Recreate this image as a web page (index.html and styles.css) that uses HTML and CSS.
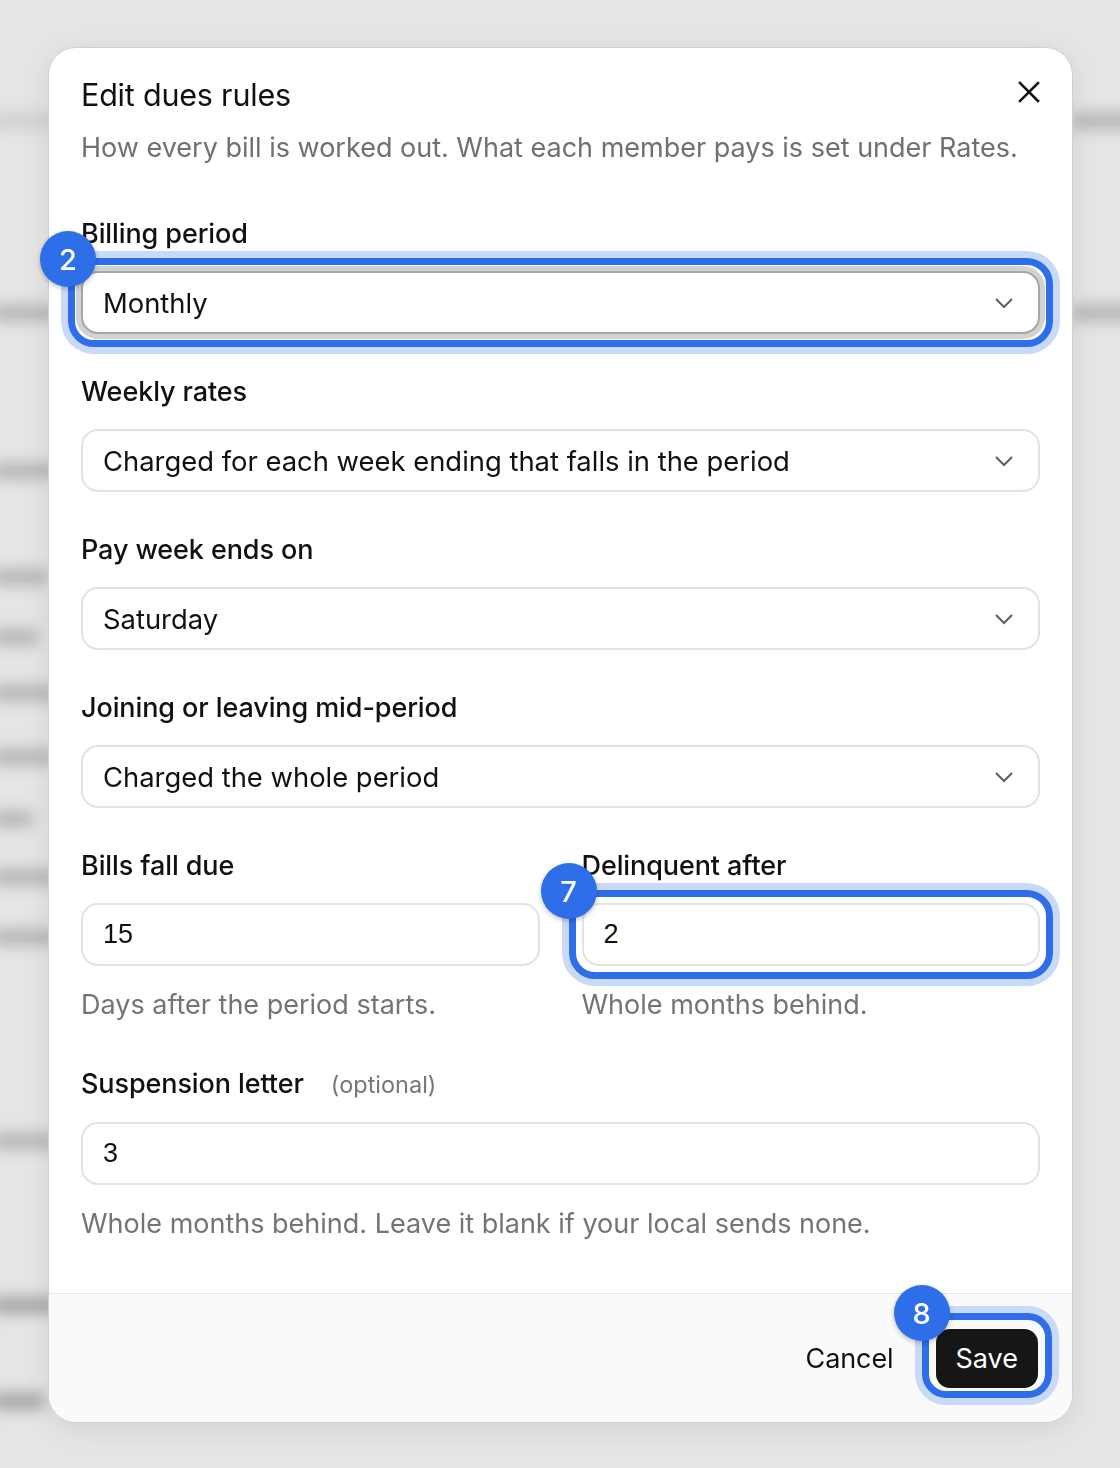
FILE: index.html
```html
<!DOCTYPE html>
<html lang="en">
<head>
<meta charset="utf-8">
<title>Edit dues rules</title>
<link rel="stylesheet" href="styles.css">
</head>
<body>
<div class="backdrop" aria-hidden="true">
  <span class="smudge s1"></span><span class="smudge s2"></span><span class="smudge s3"></span>
  <span class="smudge s4"></span><span class="smudge s5"></span><span class="smudge s6"></span>
  <span class="smudge s7"></span><span class="smudge s8"></span><span class="smudge s9"></span>
  <span class="smudge s10"></span><span class="smudge s11"></span><span class="smudge s12"></span>
  <span class="smudge s13"></span><span class="smudge r1"></span><span class="smudge r2"></span>
</div>

<div class="modal" role="dialog" aria-labelledby="dlg-title">
  <div class="modal-body">
    <header class="modal-head">
      <h1 id="dlg-title">Edit dues rules</h1>
      <button class="close" aria-label="Close">
        <svg width="22" height="22" viewBox="0 0 22 22"><path d="M2 2 L20 20 M20 2 L2 20" stroke="#111" stroke-width="2.6" stroke-linecap="square" fill="none"/></svg>
      </button>
    </header>
    <p class="lede">How every bill is worked out. What each member pays is set under Rates.</p>

    <div class="fields">
      <div class="field">
        <div class="label">Billing period</div>
        <div class="hl">
          <span class="badge">2</span>
          <div class="control select is-focus">Monthly<svg class="chev" width="20" height="12" viewBox="0 0 20 12"><path d="M2 2 L10 10 L18 2" stroke="#5f5f5f" stroke-width="2" fill="none"/></svg></div>
        </div>
      </div>

      <div class="field">
        <div class="label">Weekly rates</div>
        <div class="control select">Charged for each week ending that falls in the period<svg class="chev" width="20" height="12" viewBox="0 0 20 12"><path d="M2 2 L10 10 L18 2" stroke="#5f5f5f" stroke-width="2" fill="none"/></svg></div>
      </div>

      <div class="field">
        <div class="label">Pay week ends on</div>
        <div class="control select">Saturday<svg class="chev" width="20" height="12" viewBox="0 0 20 12"><path d="M2 2 L10 10 L18 2" stroke="#5f5f5f" stroke-width="2" fill="none"/></svg></div>
      </div>

      <div class="field">
        <div class="label">Joining or leaving mid-period</div>
        <div class="control select">Charged the whole period<svg class="chev" width="20" height="12" viewBox="0 0 20 12"><path d="M2 2 L10 10 L18 2" stroke="#5f5f5f" stroke-width="2" fill="none"/></svg></div>
      </div>

      <div class="row2">
        <div class="field">
          <div class="label">Bills fall due</div>
          <div class="control input">15</div>
          <p class="help">Days after the period starts.</p>
        </div>
        <div class="field">
          <div class="label">Delinquent after</div>
          <div class="hl">
            <span class="badge">7</span>
            <div class="control input">2</div>
          </div>
          <p class="help">Whole months behind.</p>
        </div>
      </div>

      <div class="field">
        <div class="label">Suspension letter <span class="opt">(optional)</span></div>
        <div class="control input">3</div>
        <p class="help">Whole months behind. Leave it blank if your local sends none.</p>
      </div>
    </div>
  </div>

  <footer class="modal-foot">
    <button class="cancel">Cancel</button>
    <div class="hl hl-save">
      <span class="badge">8</span>
      <button class="save">Save</button>
    </div>
  </footer>
</div>
</body>
</html>
```

FILE: styles.css
```css
* { box-sizing: border-box; }

html, body {
  margin: 0;
  padding: 0;
}

body {
  width: 1120px;
  height: 1468px;
  overflow: hidden;
  position: relative;
  background: #e5e5e5;
  font-family: Inter, "Noto Sans", "Liberation Sans", sans-serif;
  color: #111;
}

/* blurred page behind the dialog */
.backdrop {
  position: absolute;
  inset: 0;
  z-index: 0;
  filter: blur(7px);
}
.smudge {
  position: absolute;
  height: 18px;
  border-radius: 9px;
  background: #b9b9b9;
}
.s1 { left: -10px; top: 112px; width: 70px; background: #d2d2d2; }
.s2 { left: -10px; top: 304px; width: 70px; }
.s3 { left: -10px; top: 462px; width: 70px; }
.s4 { left: -10px; top: 568px; width: 60px; }
.s5 { left: -10px; top: 628px; width: 50px; }
.s6 { left: -10px; top: 684px; width: 70px; }
.s7 { left: -10px; top: 748px; width: 66px; }
.s8 { left: -10px; top: 810px; width: 44px; }
.s9 { left: -10px; top: 868px; width: 70px; }
.s10 { left: -10px; top: 928px; width: 70px; }
.s11 { left: -10px; top: 1132px; width: 70px; }
.s12 { left: -10px; top: 1296px; width: 70px; background: #a9a9a9; }
.s13 { left: -10px; top: 1392px; width: 56px; background: #a9a9a9; }
.r1 { left: 1070px; top: 112px; width: 70px; }
.r2 { left: 1070px; top: 304px; width: 70px; }

/* dialog */
.modal {
  position: relative;
  z-index: 1;
  width: 1025px;
  margin: 47px 0 0 48px;
  background: #fff;
  border: 1px solid #cfcfcf;
  border-radius: 28px;
  box-shadow: 0 6px 28px rgba(0, 0, 0, 0.08);
}

.modal-body {
  padding: 26px 32px 48px;
}

.modal-head {
  display: flex;
  align-items: center;
  justify-content: space-between;
}

h1 {
  margin: 0;
  font-size: 30.5px;
  line-height: 42px;
  font-weight: 400;
  letter-spacing: -0.2px;
  color: #111;
}

.close {
  border: 0;
  background: none;
  padding: 0;
  margin: -6px 0 0 0;
  width: 22px;
  height: 22px;
  display: flex;
}

.lede {
  margin: 12px 0 0;
  font-size: 27px;
  line-height: 40px;
  color: #707070;
}

.fields {
  margin-top: 46px;
  display: flex;
  flex-direction: column;
  gap: 38px;
}

.field {
  display: flex;
  flex-direction: column;
  min-width: 0;
}

.label {
  font-size: 27px;
  line-height: 40px;
  font-weight: 500;
  color: #111;
  margin-bottom: 17px;
  letter-spacing: -0.1px;
}

.opt {
  margin-left: 20px;
  font-size: 23.5px;
  font-weight: 400;
  color: #767676;
  letter-spacing: 0;
}

.control {
  height: 63px;
  border: 2px solid #e3e3e3;
  border-radius: 17px;
  background: #fff;
  display: flex;
  align-items: center;
  padding: 0 24px 0 20px;
  font-size: 27.4px;
  color: #111;
  white-space: nowrap;
}

.select {
  justify-content: space-between;
}

.select.is-focus {
  border-color: #a6a6a6;
  box-shadow: 0 0 0 5px #d2d2d2;
}

.input {
  font-family: "Liberation Sans", Arial, sans-serif;
  font-size: 27px;
}

.chev {
  flex: none;
}

.help {
  margin: 18px 0 0;
  font-size: 27px;
  line-height: 42px;
  color: #747474;
}

.row2 {
  display: grid;
  grid-template-columns: 1fr 1fr;
  column-gap: 42px;
}

/* annotation highlight */
.hl {
  position: relative;
}
.hl::before {
  content: "";
  position: absolute;
  inset: -13px;
  border: 7px solid #2e6ee8;
  border-radius: 26px;
  box-shadow: 0 0 0 7px #c8daf8;
  pointer-events: none;
  z-index: 1;
}
.badge {
  position: absolute;
  left: -41px;
  top: -40px;
  width: 56px;
  height: 56px;
  border-radius: 50%;
  background: #2e6ee8;
  color: #fff;
  display: flex;
  align-items: center;
  justify-content: center;
  font-size: 29px;
  font-weight: 500;
  box-shadow: 0 2px 5px rgba(0, 0, 0, 0.25);
  z-index: 2;
}

/* footer */
.modal-foot {
  display: flex;
  justify-content: flex-end;
  align-items: center;
  gap: 42px;
  padding: 35px 34px 34px;
  background: #fafafa;
  border-top: 1px solid #e6e6e6;
  border-radius: 0 0 27px 27px;
}

.cancel {
  border: 0;
  background: none;
  padding: 0;
  font-family: inherit;
  font-size: 27px;
  color: #111;
  letter-spacing: -0.1px;
}

.save {
  display: block;
  height: 59px;
  padding: 0 20px;
  border: 0;
  border-radius: 14px;
  background: #161616;
  color: #fff;
  font-family: inherit;
  font-size: 27px;
}

.hl-save::before {
  inset: -16px -14px -10px -14px;
  border-radius: 24px;
}
.hl-save .badge {
  left: -42px;
  top: -44px;
}
```
